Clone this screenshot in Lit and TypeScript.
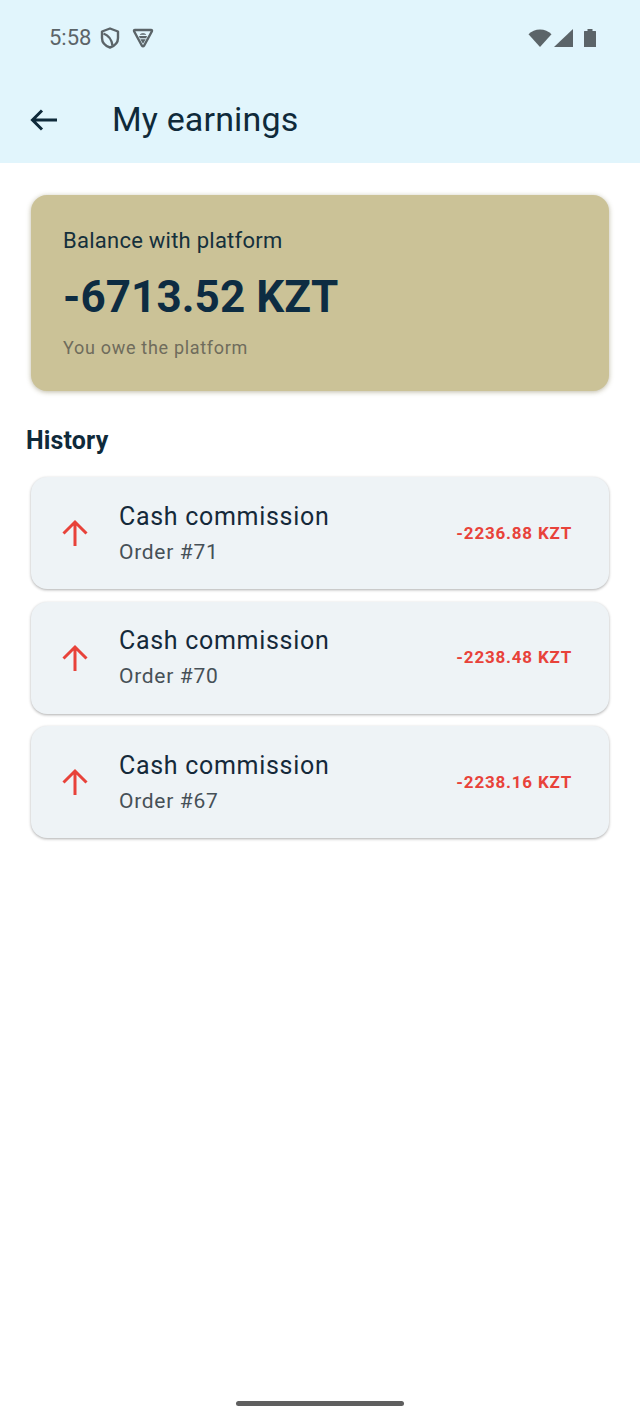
import { LitElement, html, css } from "lit";
import { customElement } from "lit/decorators.js";

const rows = [
  { order: "Order #71", amount: "-2236.88 KZT" },
  { order: "Order #70", amount: "-2238.48 KZT" },
  { order: "Order #67", amount: "-2238.16 KZT" },
];

@customElement("app-root")
export class AppRoot extends LitElement {
  static styles = css`
    :host {
      display: block;
      width: 640px;
      height: 1422px;
      background: #fff;
      font-family: Roboto, "Liberation Sans", sans-serif;
      color: #0f2a3a;
      position: relative;
      overflow: hidden;
    }
    .appbar { background: #e1f5fc; height: 163px; box-sizing: border-box; display: flex; flex-direction: column; }
    .status { height: 76px; box-sizing: border-box; padding: 0 43px 0 49px; display: flex; align-items: center; color: #5b6468; }
    .time { font-size: 22px; line-height: 78px; width: 50px; }
    .status svg { display: block; flex: none; }
    .vee { margin-left: 10px; }
    .spacer { flex: 1; }
    .signal { margin-left: 2px; }
    .battery { margin-left: 9px; }
    .toolbar { height: 87px; display: flex; align-items: center; padding-left: 28px; }
    .title { font-size: 34px; margin: -2px 0 0 52px; letter-spacing: 0.15px; color: #0f2a3a; }
    .content { padding: 32px 31px 0; }
    .balance {
      height: 196px; box-sizing: border-box; background: #cbc297; border-radius: 16px;
      padding: 33px 32px 0;
      box-shadow: 0 1px 5px rgba(90,80,30,.4);
      display: flex; flex-direction: column;
    }
    .b-label { font-size: 22px; line-height: 26px; letter-spacing: 0.25px; color: #15303c; }
    .b-value { font-size: 44px; font-weight: 700; line-height: 52px; margin-top: 17px; letter-spacing: 0.08px; color: #0d2c42; }
    .b-note { font-size: 18px; line-height: 24px; margin-top: 13px; letter-spacing: 0.7px; color: #6f6c5c; }
    .history { font-size: 25px; font-weight: 700; line-height: 30px; margin: 35px 0 21px -5px; letter-spacing: 0.15px; color: #0f2a3a; }
    .list { display: flex; flex-direction: column; gap: 12.5px; }
    .row {
      height: 112px; box-sizing: border-box; background: #eef3f6; border-radius: 16px;
      display: flex; align-items: center; padding: 0 37px 0 28px;
      box-shadow: 0 1px 3px rgba(0,0,0,.32);
    }
    .texts { margin-left: 28px; flex: 1; }
    .r-title { font-size: 25px; line-height: 30px; letter-spacing: 0.7px; color: #15293a; }
    .r-sub { font-size: 21px; line-height: 26px; margin-top: 7px; letter-spacing: 0.7px; color: #465057; }
    .amount { font-size: 17px; font-weight: 700; letter-spacing: 0.8px; color: #e8423a; margin-top: -1px; }
    .home { position: absolute; left: 236px; top: 1401px; width: 168px; height: 5px; border-radius: 3px; background: #5f5f5f; }
  `;

  render() {
    return html`
      <div class="appbar">
        <div class="status">
          <span class="time">5:58</span>
          <svg class="shield" width="22" height="24" viewBox="0 0 22 24" fill="none" stroke="#5b6468" stroke-width="2.4">
            <path d="M11 2.500 19 5.500V12c0 4.600-3 7.800-8 9.500C6 19.800 3 16.600 3 12V5.500Z" stroke-linejoin="round"/>
            <path d="M4.500 7.500C8.500 9 12.500 12.500 13.500 19.500"/>
          </svg>
          <svg class="vee" width="24" height="24" viewBox="0 0 24 24" fill="none">
            <path d="M4 4H20Q21.500 4 20.800 5.500L13.200 19.500Q12 21 10.800 19.500L3.200 5.500Q2.500 4 4 4Z" stroke="#5b6468" stroke-width="2.400" stroke-linejoin="round"/>
            <path d="M8.800 8.800C9.300 6.800 14.700 6.800 15.200 8.800ZM8 10H16L15.200 12.300H8.800ZM9.300 13.300H14.700L12 17.800Z" fill="#5b6468"/>
          </svg>
          <span class="spacer"></span>
          <svg width="24" height="20" viewBox="0 0 24 20"><path d="M12 19 .5 6.200C3.500 3.300 7.500 1.500 12 1.500S20.500 3.300 23.500 6.200Z" fill="#5b6468"/></svg>
          <svg class="signal" width="20" height="20" viewBox="0 0 20 20"><path d="M0 19 19 1V19Z" fill="#5b6468"/></svg>
          <svg class="battery" width="14" height="20" viewBox="0 0 14 20"><path d="M1.500 3H4.500V1H9.500V3H12.500Q13 3 13 3.500V19H1V3.500Q1 3 1.500 3Z" fill="#5b6468"/></svg>
        </div>
        <div class="toolbar">
          <svg width="32" height="32" viewBox="0 0 32 32" fill="none" stroke="#0f2a3a" stroke-width="3"><path d="M29 16H5M14 6.500 4.500 16 14 25.500"/></svg>
          <span class="title">My earnings</span>
        </div>
      </div>
      <div class="content">
        <div class="balance">
          <div class="b-label">Balance with platform</div>
          <div class="b-value">-6713.52 KZT</div>
          <div class="b-note">You owe the platform</div>
        </div>
        <div class="history">History</div>
        <div class="list">
          ${rows.map(r => html`
            <div class="row">
              <svg width="32" height="32" viewBox="0 0 32 32" fill="none" stroke="#e8423a" stroke-width="3"><path d="M16 29V6M4.500 16.500 16 5 27.500 16.500"/></svg>
              <div class="texts">
                <div class="r-title">Cash commission</div>
                <div class="r-sub">${r.order}</div>
              </div>
              <div class="amount">${r.amount}</div>
            </div>`)}
        </div>
      </div>
      <div class="home"></div>
    `;
  }
}
